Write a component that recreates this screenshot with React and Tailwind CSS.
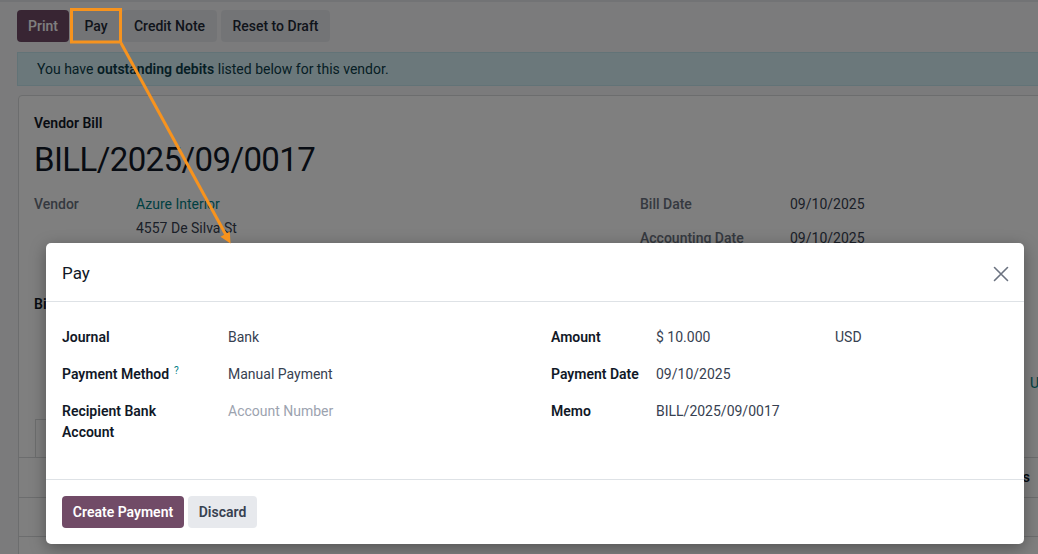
import React from 'react';

const font = { fontFamily: 'Roboto, "Noto Sans", sans-serif' };

function ToolbarButton({ children, className }) {
  return (
    <button
      type="button"
      className={`h-8 flex items-center justify-center rounded-[4px] text-[14px] font-medium ${className}`}
    >
      {children}
    </button>
  );
}

function Field({ label, children, labelWidth, help }) {
  return (
    <div className="flex items-start h-[37px]">
      <div className={`${labelWidth} shrink-0 text-[14px] leading-[21px] font-semibold text-[#111827]`}>
        {label}
        {help && <sup className="ml-[5px] text-[10px] font-normal text-[#017e84]">?</sup>}
      </div>
      <div className="text-[14px] leading-[21px] text-[#374151]">{children}</div>
    </div>
  );
}

export default function App() {
  return (
    <div style={font} className="relative w-[1038px] h-[554px] overflow-hidden bg-[#f6f7f8]">
      {/* underlying form view */}
      <div className="border-t-2 border-[#e5e7eb]">
        <div className="flex pt-[8px] pl-[17px]">
          <ToolbarButton className="w-[52px] bg-[#714b67] text-white">Print</ToolbarButton>
          <ToolbarButton className="w-[48px] ml-[3px] bg-[#e7e9ed] text-[#1f2937]">Pay</ToolbarButton>
          <ToolbarButton className="w-[95px] ml-[2px] bg-[#e7e9ed] text-[#1f2937]">Credit Note</ToolbarButton>
          <ToolbarButton className="w-[109px] ml-[4px] bg-[#e7e9ed] text-[#1f2937]">Reset to Draft</ToolbarButton>
        </div>

        <div className="mt-[10px] ml-[17px] h-[34px] flex items-center pl-[19px] bg-[#d7f0f6] border-y border-l border-[#c5e6ee] text-[14px] text-[#0c3d4a]">
          You have&nbsp;<b className="font-semibold">outstanding debits</b>&nbsp;listed below for this vendor.
        </div>

        <div className="mt-[9px] ml-[18px] w-[1040px] h-[480px] bg-white border border-[#d8dadd] rounded-[4px]">
          <div className="pl-[15px] pr-4 pt-[17px]">
            <div className="text-[14px] leading-[21px] font-semibold text-[#111827]">Vendor Bill</div>
            <div className="mt-[6px] text-[33px] leading-[40px] tracking-[-0.6px] text-[#111827]">BILL/2025/09/0017</div>

            <div className="mt-[12px] flex items-start">
              <div className="w-[606px] shrink-0">
                <div className="flex">
                  <div className="w-[102px] text-[14px] leading-[24px] font-medium text-[#6b7280]">Vendor</div>
                  <div className="h-[96px] text-[14px] leading-[24px] text-[#374151]">
                    <div className="text-[#017e84]">Azure Interior</div>
                    <div>4557 De Silva St</div>
                  </div>
                </div>
                <div className="mt-[4px] text-[14px] leading-[24px] font-semibold text-[#111827]">Bill Reference</div>
              </div>
              <div className="flex-1">
                {[
                  ['Bill Date', '09/10/2025'],
                  ['Accounting Date', '09/10/2025'],
                ].map(([l, v]) => (
                  <div key={l} className="flex h-[34px] items-start">
                    <div className="w-[150px] text-[14px] leading-[24px] font-medium text-[#6b7280]">{l}</div>
                    <div className="text-[14px] leading-[24px] text-[#374151]">{v}</div>
                  </div>
                ))}
                <div className="mt-[111px] ml-[390px] text-[14px] leading-[24px] text-[#017e84]">USD</div>
              </div>
            </div>
          </div>

          <div className="mt-[24px] h-[39px] border-b border-[#d8dadd] pl-4 flex">
            <div className="w-[110px] h-[38px] border-l border-t border-r border-[#d8dadd] bg-white"></div>
          </div>
          <div className="h-[40px] border-b border-[#d8dadd] flex items-center pl-[974px] text-[14px] font-semibold text-[#111827]">
            Taxes
          </div>
          <div className="h-[39px] border-b border-[#d8dadd]"></div>
        </div>
      </div>

      {/* backdrop */}
      <div className="absolute inset-0 bg-black/50"></div>

      {/* dialog */}
      <div className="absolute left-[46px] top-[243px] w-[978px] h-[301px] bg-white rounded-[5px] shadow-[0_4px_16px_rgba(0,0,0,0.35)] flex flex-col">
        <div className="h-[59px] shrink-0 border-b border-[#dee2e6] flex items-center justify-between px-4 pt-[3px]">
          <div className="text-[17px] text-[#111827]">Pay</div>
          <svg width="16" height="16" viewBox="0 0 16 16" className="mr-[-1px]">
            <path d="M1.5 1.5 L14.5 14.5 M14.5 1.5 L1.5 14.5" stroke="#6b7280" strokeWidth="1.6" strokeLinecap="round" />
          </svg>
        </div>

        <div className="h-[177px] shrink-0 px-4 pt-[25px] grid grid-cols-2 gap-8">
          <div>
            <Field label="Journal" labelWidth="w-[166px]">Bank</Field>
            <Field label="Payment Method" labelWidth="w-[166px]" help>Manual Payment</Field>
            <div className="flex items-start">
              <div className="w-[166px] shrink-0 text-[14px] leading-[21px] font-semibold text-[#111827]">
                Recipient Bank
                <br />
                Account
              </div>
              <div className="text-[14px] leading-[21px] text-[#9ca3af]">Account Number</div>
            </div>
          </div>
          <div>
            <div className="flex items-start h-[37px]">
              <div className="w-[105px] shrink-0 text-[14px] leading-[21px] font-semibold text-[#111827]">Amount</div>
              <div className="w-[179px] text-[14px] leading-[21px] text-[#374151]">$ 10.000</div>
              <div className="text-[14px] leading-[21px] text-[#374151]">USD</div>
            </div>
            <Field label="Payment Date" labelWidth="w-[105px]">09/10/2025</Field>
            <Field label="Memo" labelWidth="w-[105px]">BILL/2025/09/0017</Field>
          </div>
        </div>

        <div className="flex-1 border-t border-[#dee2e6] px-4 pt-[16px] flex gap-1">
          <button type="button" className="h-8 w-[122px] rounded-[4px] bg-[#714b67] text-white text-[14px] font-semibold">
            Create Payment
          </button>
          <button type="button" className="h-8 w-[69px] rounded-[4px] bg-[#e7e9ed] text-[#374151] text-[14px] font-semibold">
            Discard
          </button>
        </div>
      </div>

      {/* annotation */}
      <svg className="absolute inset-0 pointer-events-none" width="1038" height="554">
        <rect x="71.5" y="9.5" width="49" height="32.5" fill="none" stroke="#f7931e" strokeWidth="3" />
        <line x1="121" y1="43" x2="226" y2="235" stroke="#f7931e" strokeWidth="3" />
        <polygon points="230.5,243.5 220.5,236.8 229.8,231.6" fill="#f7931e" />
      </svg>
    </div>
  );
}
